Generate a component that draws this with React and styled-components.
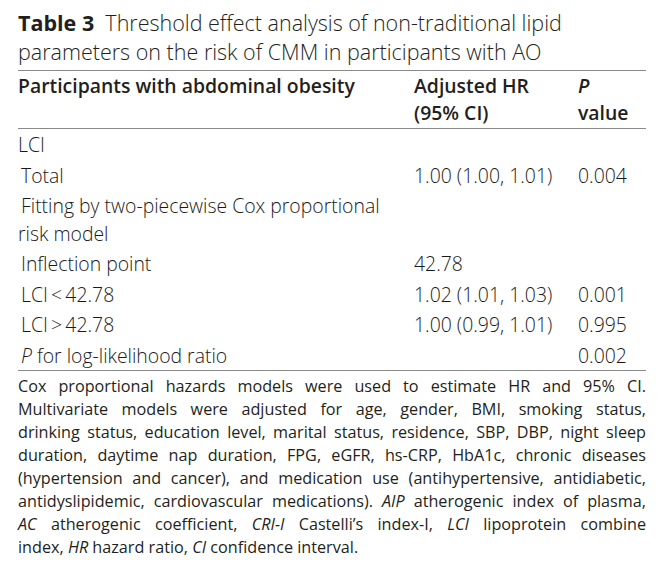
import React from 'react'
import styled, { createGlobalStyle } from 'styled-components'

const GlobalStyle = createGlobalStyle`
    html, body {
        margin: 0;
        padding: 0;
        background: #ffffff;
    }
    body {
        font-family: 'Open Sans', 'Noto Sans', sans-serif;
        color: #231f20;
    }
`

const rows = [
    { label: 'LCI', indent: false },
    { label: 'Total', hr: '1.00 (1.00, 1.01)', p: '0.004', indent: true },
    { label: ['Fitting by two-piecewise Cox proportional', 'risk model'], indent: true },
    { label: 'Inflection point', hr: '42.78', indent: true },
    { label: 'LCI\u2009<\u200942.78', hr: '1.02 (1.01, 1.03)', p: '0.001', indent: true },
    { label: 'LCI\u2009>\u200942.78', hr: '1.00 (0.99, 1.01)', p: '0.995', indent: true },
    { label: 'italicP', hr: '', p: '0.002', indent: true },
]

const footLines = [
    <>Cox proportional hazards models were used to estimate HR and 95% CI.</>,
    <>Multivariate models were adjusted for age, gender, BMI, smoking status,</>,
    <>drinking status, education level, marital status, residence, SBP, DBP, night sleep</>,
    <>duration, daytime nap duration, FPG, eGFR, hs-CRP, HbA1c, chronic diseases</>,
    <>(hypertension and cancer), and medication use (antihypertensive, antidiabetic,</>,
    <>antidyslipidemic, cardiovascular medications). <i>AIP</i> atherogenic index of plasma,</>,
    <><i>AC</i> atherogenic coefficient, <i>CRI-I</i> Castelli’s index-I, <i>LCI</i> lipoprotein combine</>,
    <>index, <i>HR</i> hazard ratio, <i>CI</i> confidence interval.</>,
]

const App = () => {
    return (
        <>
            <GlobalStyle />
            <Page>
                <Caption>
                    <CaptionLine><b>Table 3</b>&nbsp; Threshold effect analysis of non-traditional lipid</CaptionLine>
                    <CaptionLine>parameters on the risk of CMM in participants with AO</CaptionLine>
                </Caption>
                <Table>
                    <thead>
                        <tr>
                            <HeadCell>Participants with abdominal obesity</HeadCell>
                            <HeadCell>Adjusted HR<br />(95% CI)</HeadCell>
                            <HeadCell><i>P</i><br />value</HeadCell>
                        </tr>
                    </thead>
                    <tbody>
                        {rows.map((r, i) => (
                            <tr key={i}>
                                <Cell $indent={r.indent}>
                                    {r.label === 'italicP' ? (
                                        <><i>P</i> for log-likelihood ratio</>
                                    ) : Array.isArray(r.label) ? (
                                        <>{r.label[0]}<br /><Hang>{r.label[1]}</Hang></>
                                    ) : (
                                        r.label
                                    )}
                                </Cell>
                                <Cell>{r.hr}</Cell>
                                <Cell>{r.p}</Cell>
                            </tr>
                        ))}
                    </tbody>
                </Table>
                <Footnote>
                    {footLines.map((l, i) => (
                        <FootLine key={i} $last={i === footLines.length - 1}>{l}</FootLine>
                    ))}
                </Footnote>
            </Page>
        </>
    )
}

const Page = styled.div`
    width: 628px;
    padding: 8px 0 0 18px;
`

const Caption = styled.div`
    font-size: 21.5px;
    font-weight: 300;
    line-height: 29px;
    padding-bottom: 4px;
    border-bottom: 1px solid #8a8a8a;
    b {
        font-weight: 700;
    }
`

const CaptionLine = styled.div`
    white-space: nowrap;
`

const Table = styled.table`
    width: 100%;
    border-collapse: collapse;
    font-size: 19.4px;
    line-height: 27.5px;
    border-bottom: 1px solid #8a8a8a;
`

const HeadCell = styled.th`
    text-align: left;
    font-weight: 600;
    vertical-align: top;
    padding: 2px 0 2px;
    line-height: 26.5px;
    border-bottom: 1px solid #8a8a8a;
    white-space: nowrap;
    &:nth-child(1) {
        width: 396px;
    }
    &:nth-child(2) {
        width: 164px;
    }
`

const Cell = styled.td`
    vertical-align: top;
    padding: 1.5px 0 1.5px;
    font-weight: 300;
    color: #1a1a1a;
    white-space: nowrap;
    padding-left: ${(p) => (p.$indent ? '3px' : '0')};
    tr:first-child > & {
        padding-top: 2px;
    }
    tr:last-child > & {
        padding-bottom: 1px;
    }
`

const Hang = styled.span`
    margin-left: -3px;
`

const Footnote = styled.div`
    padding-top: 4px;
    font-size: 16.2px;
    line-height: 23px;
    i {
        font-style: italic;
    }
`

const FootLine = styled.div`
    text-align: justify;
    text-align-last: ${(p) => (p.$last ? 'left' : 'justify')};
    white-space: nowrap;
`

export default App
